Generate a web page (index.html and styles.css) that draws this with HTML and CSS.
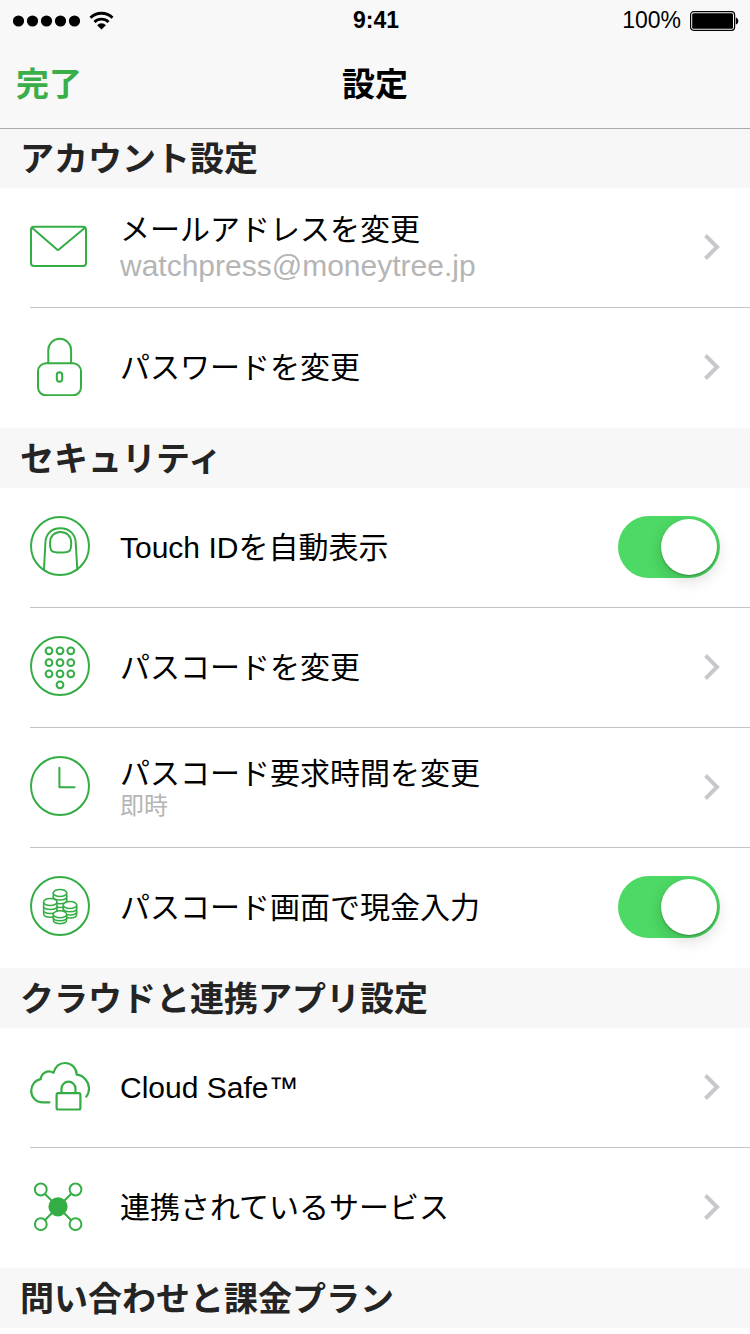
FILE: index.html
```html
<!DOCTYPE html>
<html lang="ja">
<head>
<meta charset="utf-8">
<meta name="viewport" content="width=device-width">
<title>設定</title>
<link rel="stylesheet" href="styles.css">
</head>
<body>
<svg class="defs" width="0" height="0" aria-hidden="true">
  <symbol id="chevron" viewBox="0 0 16 26"><path d="M1.500 1.500 13 13 1.500 24.500" fill="none" stroke="#c7c7cc" stroke-width="4"/></symbol>
</svg>

<header class="top">
  <div class="status">
    <div class="status-left">
      <svg width="68" height="12" viewBox="0 0 68 12" aria-hidden="true"><circle cx="5.500" cy="6" r="5.600"/><circle cx="19.500" cy="6" r="5.600"/><circle cx="33.500" cy="6" r="5.600"/><circle cx="47.500" cy="6" r="5.600"/><circle cx="61.500" cy="6" r="5.600"/></svg>
      <svg width="25" height="19" viewBox="0 0 26 20" aria-hidden="true"><g fill="none" stroke="#000" stroke-width="3"><path d="M1.400 7.200a16.400 16.400 0 0 1 23.200 0"/><path d="M5.600 11.600a10.500 10.500 0 0 1 14.800 0"/></g><path d="M13 19.500 8.400 15a6 6 0 0 1 9.200 0z"/></svg>
    </div>
    <time class="clock">9:41</time>
    <div class="status-right">
      <span>100%</span>
      <svg width="50" height="20" viewBox="0 0 50 20" aria-hidden="true"><rect x="1.600" y=".700" width="44" height="18.600" rx="3" fill="none" stroke="#000" stroke-width="1.200"/><rect x="3.200" y="2.300" width="40.800" height="15.400" rx="1.500"/><path d="M46.800 6.500c3.400 1 3.400 6 0 7z"/></svg>
    </div>
  </div>
  <nav class="nav">
    <button class="done" type="button">完了</button>
    <h1 class="title">設定</h1>
  </nav>
</header>

<main>
  <section>
    <h2 class="heading">アカウント設定</h2>
    <ul class="list">
      <li><a class="row" href="#email">
        <svg class="icon" viewBox="0 0 60 60" aria-hidden="true"><rect x="1" y="10.800" width="55" height="39.200" rx="3"/><path d="M2 11.700 26.500 33.100q1.500 1.200 3 0L55 11.700"/></svg>
        <span class="text">メールアドレスを変更<span class="detail">watchpress@moneytree.jp</span></span>
        <svg class="chevron" aria-hidden="true"><use href="#chevron"/></svg>
      </a></li>
      <li><a class="row" href="#password">
        <svg class="icon" viewBox="0 0 60 60" aria-hidden="true"><rect x="8" y="27.300" width="43" height="32" rx="8"/><path d="M18.300 27.300V14.200a11.400 11.400 0 0 1 22.800 0v13.100"/><rect x="26.800" y="36.300" width="5.400" height="9.400" rx="2.700"/></svg>
        <span class="text">パスワードを変更</span>
        <svg class="chevron" aria-hidden="true"><use href="#chevron"/></svg>
      </a></li>
    </ul>
  </section>

  <section>
    <h2 class="heading">セキュリティ</h2>
    <ul class="list">
      <li><label class="row">
        <svg class="icon" viewBox="0 0 60 60" aria-hidden="true"><circle cx="30" cy="30" r="29"/><path d="M14 53.500 15.300 28c0-10 6-15.800 15-15.800S45.800 18 45.800 28L47.300 53.500"/><path d="M20 27c0-7 4.500-11 10.600-11S41.200 20 41.200 27c0 8-1 9.600-10.600 9.600S20 35 20 27z"/></svg>
        <span class="text">Touch IDを自動表示</span>
        <input class="switch" type="checkbox" role="switch" checked>
      </label></li>
      <li><a class="row" href="#passcode">
        <svg class="icon" viewBox="0 0 60 60" aria-hidden="true"><circle cx="30" cy="30" r="29"/><circle cx="19" cy="14.800" r="3.400"/><circle cx="30" cy="14.800" r="3.400"/><circle cx="40.800" cy="14.800" r="3.400"/><circle cx="19" cy="26.700" r="3.400"/><circle cx="30" cy="26.700" r="3.400"/><circle cx="40.800" cy="26.700" r="3.400"/><circle cx="19" cy="37.800" r="3.400"/><circle cx="30" cy="37.800" r="3.400"/><circle cx="40.800" cy="37.800" r="3.400"/><circle cx="30" cy="48.800" r="3.400"/></svg>
        <span class="text">パスコードを変更</span>
        <svg class="chevron" aria-hidden="true"><use href="#chevron"/></svg>
      </a></li>
      <li><a class="row" href="#passcode-delay">
        <svg class="icon" viewBox="0 0 60 60" aria-hidden="true"><circle cx="30" cy="30" r="29"/><path d="M29.400 11.800v19.500h15.200"/></svg>
        <span class="text">パスコード要求時間を変更<span class="detail small">即時</span></span>
        <svg class="chevron" aria-hidden="true"><use href="#chevron"/></svg>
      </a></li>
      <li><label class="row">
        <svg class="icon coins" viewBox="0 0 60 60" aria-hidden="true">
          <circle class="ring" cx="30" cy="30" r="29"/>
          <path d="M23.300 17v15c0 4.700 13.400 4.700 13.400 0V17"/><path d="M23.300 20.500c0 4.700 13.400 4.700 13.400 0M23.300 24.200c0 4.700 13.400 4.700 13.400 0M23.300 28c0 4.700 13.400 4.700 13.400 0"/><ellipse cx="30" cy="17" rx="6.700" ry="3.500"/>
          <path d="M13.600 26v11.800c0 4.700 13.400 4.700 13.400 0V26"/><path d="M13.600 30c0 4.700 13.400 4.700 13.400 0M13.600 34c0 4.700 13.400 4.700 13.400 0"/><ellipse cx="20.300" cy="26" rx="6.700" ry="3.500"/>
          <path d="M33.300 29v9.500c0 4.700 13.400 4.700 13.400 0V29"/><path d="M33.300 32.300c0 4.700 13.400 4.700 13.400 0M33.300 35.500c0 4.700 13.400 4.700 13.400 0"/><ellipse cx="40" cy="29" rx="6.700" ry="3.500"/>
          <path d="M23.300 38.300v5.800c0 4.700 13.400 4.700 13.400 0v-5.800"/><path d="M23.300 41.300c0 4.700 13.400 4.700 13.400 0"/><ellipse cx="30" cy="38.300" rx="6.700" ry="3.500"/>
        </svg>
        <span class="text">パスコード画面で現金入力</span>
        <input class="switch" type="checkbox" role="switch" checked>
      </label></li>
    </ul>
  </section>

  <section>
    <h2 class="heading">クラウドと連携アプリ設定</h2>
    <ul class="list">
      <li><a class="row" href="#cloud-safe">
        <svg class="icon" viewBox="0 0 60 60" aria-hidden="true"><path d="M19.500 46.300h-6.700C5.500 46.300 1.200 40.500 1.200 35c0-6 4-11 9.600-11.800C11 17.500 17.500 13 23.500 16.700 25.500 10 29.800 7 35 7c6.500 0 11.500 5 11.700 11.700C54 19.500 59 26 59 32.500c0 3-1 6-2.700 8.200" stroke-width="2.200"/><rect x="26.600" y="37.200" width="23.800" height="16.300" rx="1.500" stroke-width="2.200"/><path d="M31.500 37v-4.300a7 7 0 0 1 14 0V37" stroke-width="2.200"/></svg>
        <span class="text">Cloud Safe™</span>
        <svg class="chevron" aria-hidden="true"><use href="#chevron"/></svg>
      </a></li>
      <li><a class="row" href="#services">
        <svg class="icon" viewBox="0 0 60 60" aria-hidden="true"><path d="m15 18 26 26M41 18 15 44"/><circle cx="10.800" cy="13.500" r="5.900"/><circle cx="45.500" cy="13.500" r="5.900"/><circle cx="10.800" cy="48.200" r="5.900"/><circle cx="45.500" cy="48.200" r="5.900"/><circle class="solid" cx="28" cy="30.800" r="8.600"/></svg>
        <span class="text">連携されているサービス</span>
        <svg class="chevron" aria-hidden="true"><use href="#chevron"/></svg>
      </a></li>
    </ul>
  </section>

  <section>
    <h2 class="heading">問い合わせと課金プラン</h2>
  </section>
</main>
</body>
</html>
```
FILE: styles.css
```css
* {
  box-sizing: border-box;
}

body {
  margin: 0;
  background: #fff;
  color: #000;
  font-family: "Liberation Sans", "Noto Sans CJK JP", sans-serif;
  font-size: 30px;
}

.defs {
  display: block;
}

.top {
  position: relative;
  z-index: 1;
  background: #f8f8f8;
  box-shadow: 0 1px 0 #a9a9ab;
}

.status {
  display: grid;
  grid-template-columns: 1fr auto 1fr;
  align-items: center;
  height: 40px;
  padding: 1px 11px 0 13px;
  font-size: 23px;
}

.status-left,
.status-right {
  display: flex;
  align-items: center;
  gap: 8px;
}

.status-right {
  justify-content: flex-end;
}

.clock {
  font-weight: 700;
}

.nav {
  display: grid;
  grid-template-columns: 1fr auto 1fr;
  align-items: center;
  height: 88px;
  padding: 0 16px 4px;
}

.done {
  justify-self: start;
  padding: 0;
  border: 0;
  background: none;
  color: #3aae49;
  font-family: inherit;
  font-size: 33px;
  font-weight: 700;
  cursor: pointer;
}

.title {
  margin: 0;
  font-size: 33px;
  font-weight: 700;
}

.heading {
  display: flex;
  align-items: center;
  height: 60px;
  margin: 0;
  padding: 0 20px 4px;
  background: #f7f7f7;
  color: #242424;
  font-size: 34px;
  font-weight: 700;
}

.list {
  margin: 0;
  padding: 0;
  list-style: none;
}

.list li {
  margin-left: 30px;
}

.row {
  display: flex;
  align-items: center;
  gap: 30px;
  min-height: 120px;
  padding: 0 30px 2px 0;
  border-bottom: 1px solid #c4c4c6;
  color: inherit;
  text-decoration: none;
}

.list li:last-child .row {
  border-bottom-color: transparent;
}

.icon {
  flex: none;
  width: 60px;
  height: 60px;
  margin-bottom: 1px;
  fill: none;
  stroke: #35ad45;
  stroke-width: 2;
  stroke-linecap: round;
  stroke-linejoin: round;
}

.coins {
  fill: #fff;
  stroke-width: 1.500px;
}

.ring {
  stroke-width: 2px;
}

.solid {
  fill: #35ad45;
}

.text {
  flex: 1;
  padding-top: 2px;
  line-height: 36px;
}

.detail {
  display: block;
  color: #b5b5b5;
}

.small {
  font-size: 24px;
  line-height: 28px;
}

.chevron {
  flex: none;
  width: 16px;
  height: 26px;
}

.switch {
  flex: none;
  width: 102px;
  height: 62px;
  margin: 0;
  padding: 3px;
  appearance: none;
  border-radius: 31px;
  background: #4cd964;
  cursor: pointer;
}

.switch::before {
  content: "";
  display: block;
  width: 56px;
  height: 56px;
  border-radius: 50%;
  background: #fff;
  box-shadow: 0 1px 2px rgba(0, 0, 0, 0.300), 0 6px 16px rgba(0, 0, 0, 0.150);
}

.switch:checked::before {
  margin-left: auto;
}

.switch:not(:checked) {
  background: #e5e5e5;
}
```
